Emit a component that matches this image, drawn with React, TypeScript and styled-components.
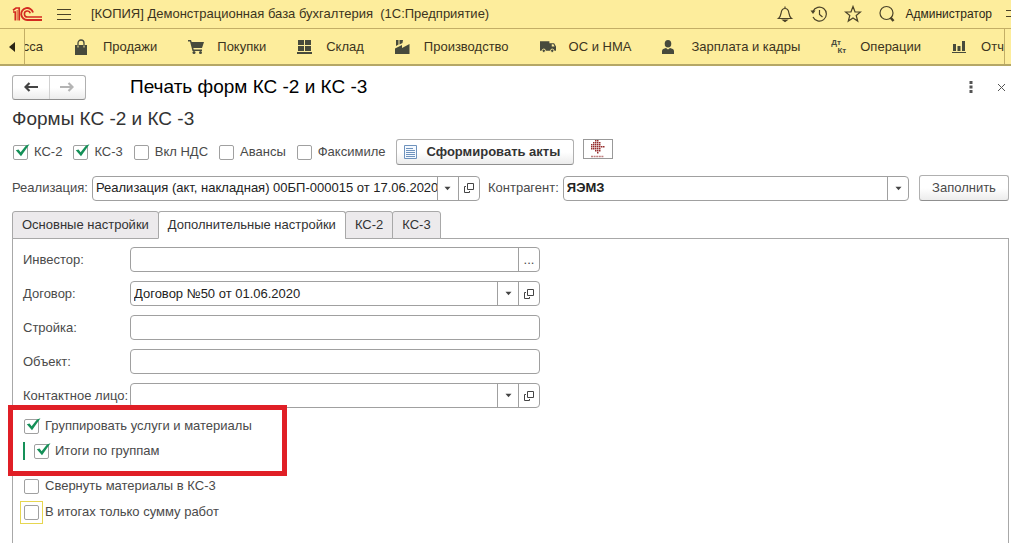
import React, { ReactNode, useId } from "react";
import styled, { createGlobalStyle, css } from "styled-components";

const Global = createGlobalStyle`
  *, *::before, *::after { box-sizing: border-box; }
  body {
    margin: 0;
    background: #fff;
    color: #4a4a4a;
    font-family: "Liberation Sans", Arial, sans-serif;
    font-size: 13px;
    line-height: 16px;
    overflow: hidden;
  }
  button, input { font: inherit; color: inherit; margin: 0; }
  button { cursor: pointer; }
`;

const Page = styled.div`
  display: flex;
  flex-direction: column;
  min-height: 100vh;
`;

const TitleBar = styled.header`
  display: flex;
  align-items: center;
  gap: 14px;
  height: 29px;
  padding-left: 12px;
  background: #fded9c;
  border-bottom: 1px solid #c3ae66;
  color: #3c3420;
  white-space: nowrap;
  overflow: hidden;
`;

const AppTitle = styled.span`
  flex: 1;
  margin-left: 6px;
`;

const TitleTools = styled.div`
  display: flex;
  align-items: center;
  gap: 16px;
`;

const IconButton = styled.button`
  display: flex;
  align-items: center;
  justify-content: center;
  flex: none;
  padding: 0;
  border: 0;
  background: none;
`;

const UserLink = styled.a`
  margin-left: -7px;
  color: #2c2616;
  font-size: 12px;
  text-decoration: none;
`;

const Sections = styled.nav`
  display: flex;
  height: 37px;
  background: #fded9c;
  border-bottom: 2px solid #b5a766;
  color: #3c3420;
`;

const ScrollLeft = styled(IconButton)`
  width: 25px;
  border-right: 1px solid #c3ae66;
`;

const SectionList = styled.div`
  display: flex;
  flex: 1;
  align-items: center;
  overflow: hidden;
  white-space: nowrap;
  border-right: 1px solid #c3ae66;
`;

const SectionsEnd = styled.div`
  width: 6px;
  flex: none;
`;

const SectionLink = styled.a`
  display: flex;
  flex: none;
  align-items: center;
  gap: 13px;
  margin-left: 31px;
  color: inherit;
  text-decoration: none;
`;

const SectionIcon = styled.span`
  display: flex;
  width: 16px;
`;

const ClippedLink = styled(SectionLink)`
  justify-content: flex-end;
  width: 18px;
  margin-left: 0;
  overflow: hidden;
`;

const Content = styled.main`
  display: flex;
  flex: 1;
  flex-direction: column;
  padding: 8px 2px 0 12px;
`;

const FormHeader = styled.div`
  display: flex;
  align-items: center;
  height: 26px;
`;

const raised = css`
  border: 1px solid #b0b0b0;
  border-bottom-color: #8f8f8f;
  border-radius: 3px;
  background: linear-gradient(#fff 50%, #ececec);
`;

const HistoryButtons = styled.div`
  ${raised}
  display: flex;
  width: 74px;
  height: 25px;
`;

const HistoryButton = styled(IconButton)`
  flex: 1;
  & + & { border-left: 1px solid #d0d0d0; }
`;

const FormTitle = styled.h1`
  flex: 1;
  margin: 0 0 0 44px;
  color: #000;
  font-size: 19px;
  line-height: 24px;
  font-weight: 400;
`;

const HeaderTools = styled.div`
  display: flex;
  align-items: center;
  gap: 24px;
  padding-right: 3px;
`;

const Subtitle = styled.h2`
  margin: 7px 0;
  color: #333;
  font-size: 19px;
  line-height: 24px;
  font-weight: 400;
`;

const CommandRow = styled.div`
  display: flex;
  align-items: center;
  gap: 11px;
  height: 28px;
  padding-left: 1px;
`;

const CheckLabel = styled.label`
  display: flex;
  align-items: center;
  gap: 6px;
  height: 20px;
  white-space: nowrap;
`;

const CheckFrame = styled.span<{ $focused?: boolean }>`
  position: relative;
  display: flex;
  width: 15px;
  height: 15px;
  outline: ${(p) => (p.$focused ? "1px solid #e6d650" : "none")};
  outline-offset: 3px;
`;

const CheckInput = styled.input`
  appearance: none;
  width: 15px;
  height: 15px;
  border: 1px solid #a0a0a0;
  border-radius: 2px;
  background: #fff;
  outline: none;
  & + svg { display: none; }
  &:checked + svg { display: block; }
`;

const Tick = styled.svg`
  position: absolute;
  left: 2px;
  top: -1px;
  pointer-events: none;
`;

const MainButton = styled.button`
  ${raised}
  display: flex;
  align-items: center;
  gap: 9px;
  height: 26px;
  padding: 0 13px 0 7px;
  color: #333;
  font-weight: 700;
  white-space: nowrap;
`;

const LogoButton = styled(IconButton)`
  width: 30px;
  height: 20px;
  margin: 0 0 7px -2px;
  border: 1px solid #999;
`;

const FillButton = styled.button`
  ${raised}
  width: 90px;
  height: 26px;
  margin-left: 10px;
  padding: 0;
`;

const DocumentRow = styled.div`
  display: flex;
  align-items: center;
  height: 26px;
  margin-top: 9px;
`;

const InlineLabel = styled.label`
  margin-right: 4px;
  white-space: nowrap;
`;

const Field = styled.div<{ $width?: number }>`
  display: flex;
  ${(p) => (p.$width ? `width: ${p.$width}px; flex: none;` : "flex: 1; min-width: 0;")}
  height: 25px;
  border: 1px solid #a0a0a0;
  border-radius: 4px;
  background: #fff;
`;

const TextInput = styled.input<{ $bold?: boolean }>`
  flex: 1;
  min-width: 0;
  padding: 0 0 0 3px;
  border: 0;
  outline: 0;
  background: transparent;
  color: #222;
  font-weight: ${(p) => (p.$bold ? 700 : 400)};
`;

const FieldButton = styled(IconButton)`
  width: 21px;
  border-left: 1px solid #a0a0a0;
`;

const Spacer = styled.span`
  width: 8px;
  flex: none;
`;

const Tabs = styled.div`
  display: flex;
  margin-top: 10px;
  height: 27px;
`;

const Tab = styled.button<{ $active?: boolean }>`
  height: 28px;
  padding: 0 9px;
  margin-right: -1px;
  border: 1px solid #a8a8a8;
  border-bottom-color: ${(p) => (p.$active ? "#fff" : "#a8a8a8")};
  border-radius: 3px 3px 0 0;
  background: ${(p) => (p.$active ? "#fff" : "#eceaec")};
  color: #333;
  white-space: nowrap;
  z-index: 1;
`;

const TabPanel = styled.section`
  display: flex;
  flex: 1;
  flex-direction: column;
  padding: 8px 10px 19px;
  border: 1px solid #a8a8a8;
  border-bottom: 0;
`;

const FormRow = styled.div`
  display: flex;
  align-items: center;
  height: 25px;
  margin-bottom: 9px;
`;

const RowLabel = styled.label`
  width: 107px;
  flex: none;
  white-space: nowrap;
`;

const Options = styled.div`
  display: flex;
  flex-direction: column;
  align-items: flex-start;
  gap: 6px;
  padding-left: 1px;
`;

const Highlight = styled.div`
  display: flex;
  flex-direction: column;
  align-items: flex-start;
  gap: 6px;
  width: 279px;
  height: 71px;
  margin: -12px 0 -6px -16px;
  padding: 6px 11px;
  border: 5px solid #e01f26;
  z-index: 1;
`;

const Nested = styled.div`
  display: flex;
  align-items: center;
  height: 18px;
  margin-left: -1px;
  padding-left: 9px;
  border-left: 2px solid #159058;
`;

function Check({ label, checked, focused }: { label: string; checked?: boolean; focused?: boolean }) {
  return (
    <CheckLabel>
      <CheckFrame $focused={focused}>
        <CheckInput type="checkbox" defaultChecked={checked} />
        <Tick width="15" height="14" viewBox="0 0 15 14">
          <path d="M.8 6.200 3.600 5.400 5.600 8.200 11 1.400 14.500.3 6 12.200Z" fill="#159058" />
        </Tick>
      </CheckFrame>
      {label}
    </CheckLabel>
  );
}

const Caret = () => (
  <svg width="7" height="5" viewBox="0 0 7 5"><path d="M.5.800h6L3.500 4.200Z" fill="#444" /></svg>
);

const OpenIcon = () => (
  <svg width="10" height="10" viewBox="0 0 10 10" fill="none" stroke="#444">
    <path d="M3.500.5h6v6h-6zM2 3.500H.5v6h5V8" />
  </svg>
);

type FieldKind = "select" | "open" | "more";

function FormField({ id, value, width, buttons = [], bold }: {
  id: string; value?: string; width?: number; buttons?: FieldKind[]; bold?: boolean;
}) {
  const content: Record<FieldKind, [string, ReactNode]> = {
    select: ["Выбрать из списка", <Caret key="c" />],
    open: ["Открыть", <OpenIcon key="o" />],
    more: ["Выбрать", "..."],
  };
  return (
    <Field $width={width}>
      <TextInput id={id} defaultValue={value} $bold={bold} />
      {buttons.map((b) => (
        <FieldButton key={b} type="button" aria-label={content[b][0]}>{content[b][1]}</FieldButton>
      ))}
    </Field>
  );
}

function LabeledRow({ label, value, buttons }: { label: string; value?: string; buttons?: FieldKind[] }) {
  const id = useId();
  return (
    <FormRow>
      <RowLabel htmlFor={id}>{label}</RowLabel>
      <FormField id={id} value={value} width={410} buttons={buttons} />
    </FormRow>
  );
}

const ink = "#474a3c";

const Logo = () => (
  <svg width="31" height="16" viewBox="0 0 31 16" fill="none" stroke="#d32a20">
    <path d="M1 6h2.300v8.500M1 4.200 4 2h3.200v12.500" strokeWidth="1.700" />
    <path d="M5.200 4v10.500" strokeWidth=".8" />
    <path d="M21 6.500A6 6 0 1 0 15.500 14H30" strokeWidth="1.900" />
    <path d="M18.300 7.200A3 3 0 1 0 15.500 11H30" strokeWidth="1.600" />
  </svg>
);

const MenuIcon = () => (
  <svg width="14" height="12" viewBox="0 0 14 12" stroke="#4a4228"><path d="M0 1.500h14M0 6.500h14M0 11.500h14" /></svg>
);

const toolProps = { width: 18, height: 18, viewBox: "0 0 18 18", fill: "none", stroke: "#4a4228", strokeWidth: 1.2 };

const BellIcon = () => (
  <svg {...toolProps}>
    <path d="M2.500 13.500h13c-2-1.500-2.200-3-2.600-5.500C12.500 5 11.500 3.500 9 3.500S5.500 5 5.100 8c-.4 2.500-.6 4-2.600 5.500ZM9 1.500v2" />
    <path d="M7 15h4l-2 1.500Z" fill="#4a4228" />
  </svg>
);
const HistoryIcon = () => (
  <svg {...toolProps}>
    <path d="M3 6.200A7 7 0 1 1 3 12M9.500 5v4.500l3 2.500" />
    <path d="M.5 5.500h5L3 9Z" fill="#4a4228" stroke="none" />
  </svg>
);
const StarIcon = () => (
  <svg {...toolProps}><path d="m9 1.500 2 5.300 5.500.2-4.300 3.500 1.500 5.500L9 12.900 4.300 16l1.500-5.500L1.500 7 7 6.800Z" /></svg>
);
const SearchIcon = () => (
  <svg {...toolProps}><circle cx="8.500" cy="8" r="6.500" /><path d="m12.500 12.500 3 3.500" strokeWidth="2.500" /></svg>
);
const FiltersIcon = () => (
  <svg width="5" height="12" viewBox="0 0 5 12" stroke="#4a4228"><path d="M0 2.500h5M0 8.500h5" /></svg>
);

const BagIcon = () => (
  <svg width="14" height="16" viewBox="0 0 14 16">
    <path d="M1 6h12v10H1z" fill={ink} />
    <path d="M4 8V4a3 3 0 0 1 6 0v4" fill="none" stroke={ink} strokeWidth="1.300" />
    <path d="M4 6.500v2M10 6.500v2" stroke="#fded9c" />
  </svg>
);
const CartIcon = () => (
  <svg width="16" height="15" viewBox="0 0 16 15" fill={ink}>
    <path d="M0 1h3l.7 2H16l-2 6H5.300l.4 1.500H14V12H4.500L2 2.500H0Z" />
    <circle cx="6" cy="13.500" r="1.500" /><circle cx="12.500" cy="13.500" r="1.500" />
  </svg>
);
const StockIcon = () => (
  <svg width="15" height="14" viewBox="0 0 15 14" fill={ink}>
    <path d="M1 0h6v5H1zM8 0h6v5H8zM1 6h6v5H1zM8 6h6v5H8zM0 12h15v2H0z" />
  </svg>
);
const FactoryIcon = () => (
  <svg width="15" height="14" viewBox="0 0 15 14" fill={ink}>
    <path d="M0 14V8.500L7 5v3L14.500 4v10ZM1 0h2.500v4.500L1 6ZM4.500 0H8l-.5 3-3 1.500Z" />
  </svg>
);
const TruckIcon = () => (
  <svg width="17" height="12" viewBox="0 0 17 12" fill={ink}>
    <path d="M0 0h10v2h5l2 3.500V10H0Z" /><path d="M12.500 3.200h1.800l1.200 2.300h-3z" fill="#fded9c" />
    <circle cx="4" cy="10" r="1.800" stroke="#fded9c" /><circle cx="13" cy="10" r="1.800" stroke="#fded9c" />
  </svg>
);
const PersonIcon = () => (
  <svg width="12" height="14" viewBox="0 0 12 14" fill={ink}>
    <ellipse cx="6" cy="3.800" rx="3.300" ry="3.800" /><path d="M0 14v-3c0-2 2-2.500 4-3l2 1.500L8 8c2 .5 4 1 4 3v3Z" />
  </svg>
);
const ChartIcon = () => (
  <svg width="14" height="12" viewBox="0 0 14 12" fill={ink}>
    <path d="M1 3h3v7H1zM5.500 5h3v5h-3zM10 0h3v10h-3zM0 11h14v1H0z" />
  </svg>
);

const DebitCredit = styled.span`
  display: flex;
  flex-direction: column;
  width: 15px;
  color: #474a3c;
  font-size: 8px;
  line-height: 8px;
  font-weight: 700;
`;
const CreditPart = styled.span`
  align-self: flex-end;
`;

const ArrowIcon = ({ back }: { back?: boolean }) => (
  <svg width="14" height="10" viewBox="0 0 14 10" fill="none" stroke={back ? "#444" : "#b4b4b4"} strokeWidth="2.200">
    <path d={back ? "M14 5H1.500M5.500 1 1.500 5l4 4" : "M0 5h12.500M8.500 1l4 4-4 4"} />
  </svg>
);

const SheetIcon = () => (
  <svg width="13" height="14" viewBox="0 0 13 14" fill="#f4f9ff" stroke="#6f93bd">
    <path d="M.5.5h12v13H.5z" /><path d="M2 3.500h7M2 5.500h9M2 7.500h9M2 9.500h9M2 11.500h9" />
  </svg>
);

const dotRows = [[4, 6], [2, 4, 6, 8], [0, 2, 4, 6, 8], [0, 2, 4, 6, 8, 10, 12], [0, 2, 4, 6, 8], [4, 6, 8], [6]];
const DotsLogo = () => (
  <svg width="20" height="18" viewBox="0 0 20 18" fill="#962c2c">
    {dotRows.map((row, y) => row.map((x) => <rect key={`${x}-${y}`} x={x + 3} y={y * 2} width="1.500" height="1.500" />))}
    <path d="M3 16.500h13" stroke="#c08080" strokeWidth="1.500" strokeDasharray="2 .6" />
  </svg>
);

const sections: [string, ReactNode][] = [
  ["Продажи", <BagIcon />],
  ["Покупки", <CartIcon />],
  ["Склад", <StockIcon />],
  ["Производство", <FactoryIcon />],
  ["ОС и НМА", <TruckIcon />],
  ["Зарплата и кадры", <PersonIcon />],
  ["Операции", <DebitCredit>Дт<CreditPart>Кт</CreditPart></DebitCredit>],
  ["Отч", <ChartIcon />],
];

export default function App() {
  return (
    <Page>
      <Global />
      <TitleBar>
        <Logo />
        <IconButton aria-label="Меню"><MenuIcon /></IconButton>
        <AppTitle>{"[КОПИЯ] Демонстрационная база бухгалтерия \u00a0(1С:Предприятие)"}</AppTitle>
        <TitleTools>
          <IconButton aria-label="Уведомления"><BellIcon /></IconButton>
          <IconButton aria-label="История"><HistoryIcon /></IconButton>
          <IconButton aria-label="Избранное"><StarIcon /></IconButton>
          <IconButton aria-label="Поиск"><SearchIcon /></IconButton>
          <UserLink href="#">Администратор</UserLink>
        </TitleTools>
        <IconButton aria-label="Настройки"><FiltersIcon /></IconButton>
      </TitleBar>
      <Sections>
        <ScrollLeft aria-label="Прокрутить влево">
          <svg width="6" height="10" viewBox="0 0 6 10"><path d="M6 0v10L0 5Z" fill="#2c2616" /></svg>
        </ScrollLeft>
        <SectionList>
          <ClippedLink href="#">сса</ClippedLink>
          {sections.map(([name, icon]) => (
            <SectionLink key={name} href="#"><SectionIcon>{icon}</SectionIcon>{name}</SectionLink>
          ))}
        </SectionList>
        <SectionsEnd />
      </Sections>
      <Content>
        <FormHeader>
          <HistoryButtons>
            <HistoryButton aria-label="Назад"><ArrowIcon back /></HistoryButton>
            <HistoryButton aria-label="Вперед"><ArrowIcon /></HistoryButton>
          </HistoryButtons>
          <FormTitle>Печать форм КС -2 и КС -3</FormTitle>
          <HeaderTools>
            <IconButton aria-label="Еще">
              <svg width="4" height="12" viewBox="0 0 4 12" fill="#555"><path d="M.5 0h3v3h-3zM.5 4.500h3v3h-3zM.5 9h3v3h-3z" /></svg>
            </IconButton>
            <IconButton aria-label="Закрыть">
              <svg width="9" height="9" viewBox="0 0 9 9" stroke="#555"><path d="m1 1 7 7M8 1 1 8" /></svg>
            </IconButton>
          </HeaderTools>
        </FormHeader>
        <Subtitle>Формы КС -2 и КС -3</Subtitle>
        <CommandRow>
          <Check label="КС-2" checked />
          <Check label="КС-3" checked />
          <Check label="Вкл НДС" />
          <Check label="Авансы" />
          <Check label="Факсимиле" />
          <MainButton><SheetIcon />Сформировать акты</MainButton>
          <LogoButton aria-label="О разработчике"><DotsLogo /></LogoButton>
        </CommandRow>
        <DocumentRow>
          <InlineLabel htmlFor="sale">Реализация:</InlineLabel>
          <FormField id="sale" value="Реализация (акт, накладная) 00БП-000015 от 17.06.2020" width={388} buttons={["select", "open"]} />
          <Spacer />
          <InlineLabel htmlFor="partner">Контрагент:</InlineLabel>
          <FormField id="partner" value="ЯЭМЗ" bold buttons={["select"]} />
          <FillButton>Заполнить</FillButton>
        </DocumentRow>
        <Tabs role="tablist">
          <Tab role="tab">Основные настройки</Tab>
          <Tab role="tab" $active aria-selected>Дополнительные настройки</Tab>
          <Tab role="tab">КС-2</Tab>
          <Tab role="tab">КС-3</Tab>
        </Tabs>
        <TabPanel>
          <LabeledRow label="Инвестор:" buttons={["more"]} />
          <LabeledRow label="Договор:" value="Договор №50 от 01.06.2020" buttons={["select", "open"]} />
          <LabeledRow label="Стройка:" />
          <LabeledRow label="Объект:" />
          <LabeledRow label="Контактное лицо:" buttons={["select", "open"]} />
          <Options>
            <Highlight>
              <Check label="Группировать услуги и материалы" checked />
              <Nested><Check label="Итоги по группам" checked /></Nested>
            </Highlight>
            <Check label="Свернуть материалы в КС-3" />
            <Check label="В итогах только сумму работ" focused />
          </Options>
        </TabPanel>
      </Content>
    </Page>
  );
}
